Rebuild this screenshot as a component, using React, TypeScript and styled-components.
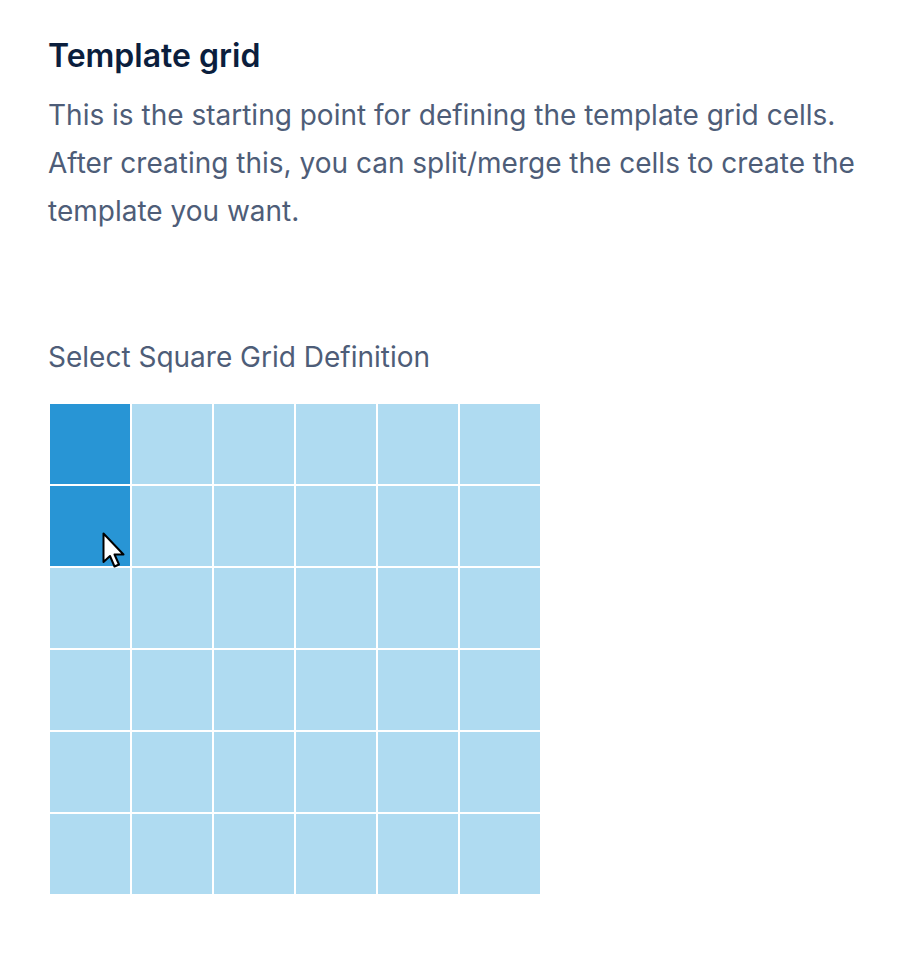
import { createGlobalStyle } from "styled-components";
import styled from "styled-components";

const GlobalStyle = createGlobalStyle`
  body {
    margin: 0;
    background: #ffffff;
    font-family: Inter, "Noto Sans", sans-serif;
  }
`;

const Page = styled.div`
  padding: 36px 48px;
`;

const Title = styled.h2`
  margin: 0 0 15px;
  font-size: 32px;
  line-height: 40px;
  font-weight: 600;
  color: #0b1e3d;
`;

const Description = styled.p`
  margin: 0;
  font-size: 28px;
  line-height: 48px;
  color: #4e5d78;
`;

const Label = styled.div`
  margin-top: 98px;
  font-size: 28px;
  line-height: 48px;
  color: #4e5d78;
`;

const GridWrap = styled.div`
  position: relative;
  margin-top: 23px;
  margin-left: 2px;
  width: 490px;
`;

const Grid = styled.div`
  display: grid;
  grid-template-columns: repeat(6, 80px);
  grid-auto-rows: 80px;
  gap: 2px;
`;

const Cell = styled.div<{ $selected: boolean }>`
  background: ${({ $selected }) => ($selected ? "#2895d5" : "#afdbf1")};
`;

const Cursor = styled.svg`
  position: absolute;
  left: 52px;
  top: 128px;
  pointer-events: none;
`;

const SIZE = 6;

function App() {
  const cells = [];
  for (let r = 0; r < SIZE; r++) {
    for (let c = 0; c < SIZE; c++) {
      cells.push(<Cell key={`${r}-${c}`} $selected={c === 0 && r < 2} />);
    }
  }

  return (
    <Page>
      <GlobalStyle />
      <Title>Template grid</Title>
      <Description>
        This is the starting point for defining the template grid cells.
        <br />
        After creating this, you can split/merge the cells to create the
        <br />
        template you want.
      </Description>
      <Label>Select Square Grid Definition</Label>
      <GridWrap>
        <Grid>{cells}</Grid>
        <Cursor width="26" height="38" viewBox="0 0 26 38">
          <path
            d="M1.5 1.5 L1.5 30 L8 24 L12.5 34.5 L17 32.5 L12.5 22.5 L21.5 22.5 Z"
            fill="#ffffff"
            stroke="#000000"
            strokeWidth="2"
            strokeLinejoin="round"
          />
        </Cursor>
      </GridWrap>
    </Page>
  );
}

export default App;
